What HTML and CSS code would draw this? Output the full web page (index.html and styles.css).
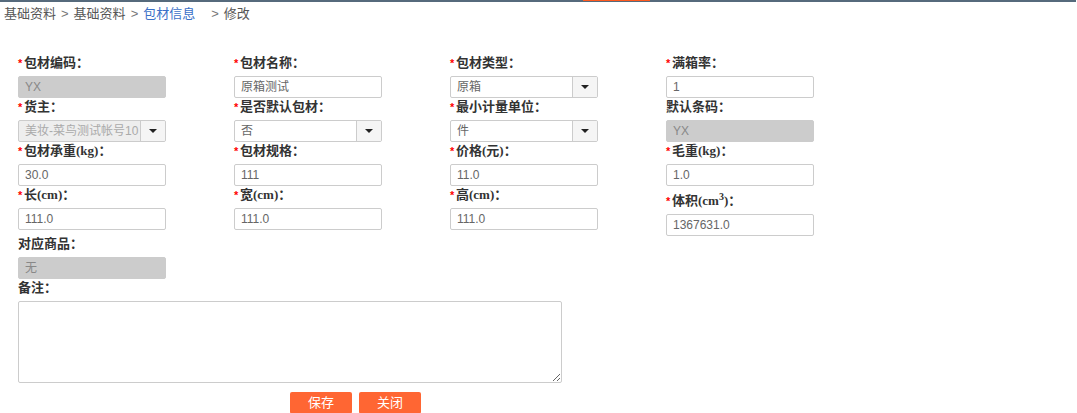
FILE: index.html
```html
<!DOCTYPE html>
<html lang="zh">
<head>
<meta charset="utf-8">
<title>修改</title>
<link rel="stylesheet" href="styles.css">
</head>
<body>
<div class="topbar"><span class="topbar-active"></span></div>
<div class="crumbs">
  <span>基础资料</span><span class="sep">&gt;</span><span>基础资料</span><span class="sep">&gt;</span><a class="crumb-link">包材信息</a><span class="sep sep-wide">&gt;</span><span>修改</span>
</div>
<form class="form">
  <div class="grid">
    <div class="field"><label class="lbl"><i class="req">*</i>包材编码：</label><div class="inp disabled">YX</div></div>
    <div class="field"><label class="lbl"><i class="req">*</i>包材名称：</label><div class="inp">原箱测试</div></div>
    <div class="field"><label class="lbl"><i class="req">*</i>包材类型：</label><div class="inp sel"><span class="sel-text">原箱</span><span class="caret"></span></div></div>
    <div class="field"><label class="lbl"><i class="req">*</i>满箱率：</label><div class="inp">1</div></div>

    <div class="field"><label class="lbl"><i class="req">*</i>货主：</label><div class="inp sel sel-disabled"><span class="sel-text">美妆-菜鸟测试帐号10</span><span class="caret"></span></div></div>
    <div class="field"><label class="lbl"><i class="req">*</i>是否默认包材：</label><div class="inp sel"><span class="sel-text">否</span><span class="caret"></span></div></div>
    <div class="field"><label class="lbl"><i class="req">*</i>最小计量单位：</label><div class="inp sel"><span class="sel-text">件</span><span class="caret"></span></div></div>
    <div class="field"><label class="lbl">默认条码：</label><div class="inp disabled">YX</div></div>

    <div class="field"><label class="lbl"><i class="req">*</i>包材承重(kg)：</label><div class="inp">30.0</div></div>
    <div class="field"><label class="lbl"><i class="req">*</i>包材规格：</label><div class="inp">111</div></div>
    <div class="field"><label class="lbl"><i class="req">*</i>价格(元)：</label><div class="inp">11.0</div></div>
    <div class="field"><label class="lbl"><i class="req">*</i>毛重(kg)：</label><div class="inp">1.0</div></div>

    <div class="field"><label class="lbl"><i class="req">*</i>长(cm)：</label><div class="inp">111.0</div></div>
    <div class="field"><label class="lbl"><i class="req">*</i>宽(cm)：</label><div class="inp">111.0</div></div>
    <div class="field"><label class="lbl"><i class="req">*</i>高(cm)：</label><div class="inp">111.0</div></div>
    <div class="field"><label class="lbl lbl-tall"><i class="req">*</i>体积(cm<sup>3</sup>)：</label><div class="inp">1367631.0</div></div>

    <div class="field field-goods"><label class="lbl">对应商品：</label><div class="inp disabled">无</div></div>
    <div class="field field-full"><label class="lbl">备注：</label><div class="textarea"><span class="grip"></span></div></div>
  </div>
  <div class="actions">
    <button type="button" class="btn">保存</button>
    <button type="button" class="btn">关闭</button>
  </div>
</form>
</body>
</html>
```

FILE: styles.css
```css
html, body {
  margin: 0;
  padding: 0;
  background: #fff;
}
body {
  font-family: "Liberation Sans", "Noto Sans CJK SC", sans-serif;
  color: #555;
}
.topbar {
  height: 2px;
  background: #566a7c;
  margin-right: 1px;
  position: relative;
}
.topbar-active {
  position: absolute;
  left: 583px;
  top: 0;
  width: 67px;
  height: 1px;
  background: #ff5a1f;
}
.crumbs {
  display: flex;
  align-items: center;
  height: 24px;
  padding-left: 4px;
  font-size: 13px;
  color: #555;
  line-height: 24px;
}
.sep {
  color: #777;
  margin: 0 5px 0 5px;
}
.sep-wide {
  margin-left: 16px;
}
.crumb-link {
  color: #3a70c8;
}
.form {
  padding: 28px 0 0 18px;
}
.grid {
  display: grid;
  grid-template-columns: repeat(4, 216px);
  align-items: start;
}
.field {
  display: flex;
  flex-direction: column;
}
.lbl {
  display: block;
  height: 18px;
  line-height: 18px;
  margin-bottom: 4px;
  font-family: "Liberation Serif", "Noto Sans CJK SC", serif;
  font-weight: bold;
  font-size: 13px;
  color: #333;
  white-space: nowrap;
}
.lbl-tall {
  height: 24px;
  line-height: 30px;
}
.lbl sup {
  font-size: 10px;
  line-height: 0;
  vertical-align: 5px;
}
.req {
  font-style: normal;
  color: #f00;
  font-size: 11px;
  font-family: "Liberation Sans", sans-serif;
  display: inline-block;
  width: 6px;
}
.inp {
  box-sizing: border-box;
  width: 148px;
  height: 22px;
  border: 1px solid #ccc;
  border-radius: 2px;
  padding: 0 6px;
  font-size: 12px;
  line-height: 20px;
  color: #666;
  background: #fff;
  white-space: nowrap;
  overflow: hidden;
}
.inp.disabled {
  background: #ccc;
  border-color: #ccc;
  color: #888;
}
.sel {
  display: flex;
  padding: 0 0 0 6px;
}
.sel-text {
  flex: 1;
  overflow: hidden;
  white-space: nowrap;
}
.sel-disabled {
  background: #eee;
  color: #aaa;
}
.caret {
  flex: none;
  width: 24px;
  height: 20px;
  border-left: 1px solid #ccc;
  background: #f5f5f5;
  position: relative;
}
.caret::after {
  content: "";
  position: absolute;
  left: 8px;
  top: 8px;
  border-left: 4px solid transparent;
  border-right: 4px solid transparent;
  border-top: 4px solid #222;
}
.field-goods {
  grid-column: 1 / 5;
  margin-top: -1px;
}
.field-full {
  grid-column: 1 / 5;
}
.textarea {
  box-sizing: border-box;
  width: 544px;
  height: 82px;
  border: 1px solid #ccc;
  border-radius: 2px;
  position: relative;
}
.grip {
  position: absolute;
  right: 1px;
  bottom: 1px;
  width: 7px;
  height: 7px;
  background: linear-gradient(135deg, transparent 45%, #666 45%, #666 55%, transparent 55%, transparent 75%, #666 75%, #666 85%, transparent 85%);
}
.actions {
  display: flex;
  gap: 7px;
  padding: 9px 0 0 272px;
}
.btn {
  width: 62px;
  height: 22px;
  border: none;
  border-radius: 2px;
  background: #ff6633;
  color: #fff;
  font-family: "Liberation Sans", "Noto Sans CJK SC", sans-serif;
  font-size: 13px;
  padding: 0;
  line-height: 22px;
}
```
